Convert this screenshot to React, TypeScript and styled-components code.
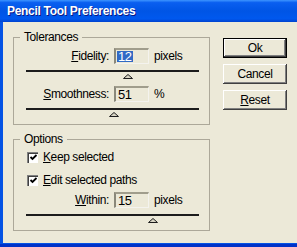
import styled, { createGlobalStyle } from "styled-components";

const GlobalStyle = createGlobalStyle`
  html, body {
    margin: 0;
    padding: 0;
    overflow: hidden;
    background: #ece9d8;
  }
  body {
    font-family: "Liberation Sans", Arial, sans-serif;
    font-size: 12px;
    letter-spacing: -0.4px;
    color: #000;
  }
`;

const Window = styled.div`
  width: 297px;
  height: 247px;
  display: flex;
  flex-direction: column;
  background: #0550e0;
`;

const TitleBar = styled.div`
  height: 22px;
  flex: none;
  display: flex;
  align-items: center;
  padding-left: 7px;
  background: linear-gradient(
    to bottom,
    #3d95ff 0%,
    #0a5ff0 12%,
    #0055e5 50%,
    #0058ee 85%,
    #0043cf 100%
  );
  color: #fff;
  font-weight: bold;
  font-size: 12px;
  letter-spacing: -0.3px;
  text-shadow: 1px 1px #0a1883;
`;

const Frame = styled.div`
  flex: 1;
  display: flex;
  padding: 0 0 4px 3px;
  background: #0553e4;
  box-shadow: inset 0 -3px #0032c8;
`;

const Content = styled.div`
  flex: 1;
  display: flex;
  gap: 13px;
  padding: 15px 0 0 10px;
  background: #ece9d8;
`;

const LeftCol = styled.div`
  display: flex;
  flex-direction: column;
  gap: 14px;
`;

const Group = styled.div<{ $padTop: number }>`
  position: relative;
  box-sizing: border-box;
  width: 197px;
  border: 1px solid #aca899;
  padding-top: ${(p) => p.$padTop}px;
  display: flex;
  flex-direction: column;
`;

const Legend = styled.span`
  position: absolute;
  top: -8px;
  left: 6px;
  padding: 0 4px;
  background: #ece9d8;
  line-height: 15px;
`;

const ValueRow = styled.div<{ $gap?: number }>`
  height: 16px;
  margin-top: ${(p) => p.$gap ?? 0}px;
  display: flex;
  align-items: center;
  gap: 5px;
`;

const Label = styled.label`
  width: 95px;
  text-align: right;
`;

const Field = styled.div`
  box-sizing: border-box;
  width: 35px;
  height: 16px;
  padding-left: 1px;
  display: flex;
  align-items: center;
  font-size: 13px;
  border-top: 2px solid #a09d8c;
  border-left: 2px solid #8a887a;
  border-right: 1px solid #f4f3ee;
  border-bottom: 1px solid #f4f3ee;
`;

const Selected = styled.span`
  background: #316ac5;
  color: #fff;
  line-height: 11px;
  padding: 0 1px;
`;

const Plain = styled.span`
  padding-left: 1px;
`;

const SliderBlock = styled.div`
  position: relative;
  margin: 6px 0 0 12px;
  width: 173px;
  height: 16px;
`;

const Track = styled.div`
  height: 2px;
  background: #1c1c1c;
`;

const Thumb = styled.svg`
  position: absolute;
  top: 4px;
  display: block;
`;

const CheckRow = styled.div<{ $gap?: number }>`
  height: 16px;
  margin-top: ${(p) => p.$gap ?? 0}px;
  padding-left: 13px;
  display: flex;
  align-items: center;
  gap: 5px;
`;

const Box = styled.span`
  box-sizing: border-box;
  width: 11px;
  height: 11px;
  background: #fff;
  border-top: 1px solid #808080;
  border-left: 1px solid #808080;
  box-shadow: inset 1px 1px #404040;
  display: flex;
  align-items: center;
  justify-content: center;
`;

const ButtonCol = styled.div`
  display: flex;
  flex-direction: column;
  gap: 6px;
  margin-top: 1px;
`;

const Button = styled.button<{ $default?: boolean }>`
  box-sizing: border-box;
  width: 64px;
  height: 20px;
  padding: 0;
  font: inherit;
  letter-spacing: inherit;
  color: #000;
  background: #ece9d8;
  border: ${(p) => (p.$default ? "1px solid #000" : "none")};
  box-shadow: inset -1px -1px #404040, inset 1px 1px #fff,
    inset -2px -2px #808080;
`;

function Slider({ value, min, max }: { value: number; min: number; max: number }) {
  const pct = ((value - min) / (max - min)) * 100;
  return (
    <SliderBlock>
      <Track />
      <Thumb
        width="10"
        height="5"
        viewBox="0 0 10 5"
        style={{ left: `calc(${pct}% - 5px)` }}
      >
        <polygon points="5,0.5 9.5,4.5 0.5,4.5" fill="#d8d5c4" stroke="#1c1c1c" strokeWidth="1" />
      </Thumb>
    </SliderBlock>
  );
}

function Check() {
  return (
    <Box>
      <svg width="9" height="9" viewBox="0 0 9 9">
        <path d="M1.5 4 L3.5 6 L7.5 2" fill="none" stroke="#000" strokeWidth="1.8" />
      </svg>
    </Box>
  );
}

export default function App() {
  return (
    <>
      <GlobalStyle />
      <Window>
        <TitleBar>Pencil Tool Preferences</TitleBar>
        <Frame>
          <Content>
            <LeftCol>
              <Group $padTop={10}>
                <Legend>Tolerances</Legend>
                <ValueRow>
                  <Label>
                    <u>F</u>idelity:
                  </Label>
                  <Field>
                    <Selected>12</Selected>
                  </Field>
                  <span>pixels</span>
                </ValueRow>
                <Slider value={12} min={0.5} max={20} />
                <ValueRow>
                  <Label>
                    <u>S</u>moothness:
                  </Label>
                  <Field>
                    <Plain>51</Plain>
                  </Field>
                  <span>%</span>
                </ValueRow>
                <Slider value={51} min={0} max={100} />
              </Group>
              <Group $padTop={9}>
                <Legend>Options</Legend>
                <CheckRow>
                  <Check />
                  <span>
                    <u>K</u>eep selected
                  </span>
                </CheckRow>
                <CheckRow $gap={7}>
                  <Check />
                  <span>
                    <u>E</u>dit selected paths
                  </span>
                </CheckRow>
                <ValueRow $gap={4}>
                  <Label>
                    <u>W</u>ithin:
                  </Label>
                  <Field>
                    <Plain>15</Plain>
                  </Field>
                  <span>pixels</span>
                </ValueRow>
                <Slider value={15} min={1} max={20} />
              </Group>
            </LeftCol>
            <ButtonCol>
              <Button $default>Ok</Button>
              <Button>Cancel</Button>
              <Button>
                <u>R</u>eset
              </Button>
            </ButtonCol>
          </Content>
        </Frame>
      </Window>
    </>
  );
}
